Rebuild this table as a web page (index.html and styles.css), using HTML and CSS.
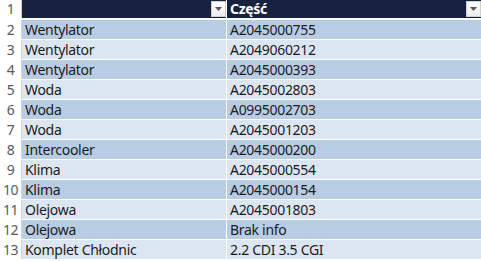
FILE: index.html
```html
<!DOCTYPE html>
<html lang="pl">
<head>
<meta charset="utf-8">
<link rel="stylesheet" href="styles.css">
</head>
<body>
<div class="sheet">
  <div class="row head">
    <div class="num">1</div>
    <div class="cell"><span class="txt"></span><span class="dd"><svg width="7" height="4" viewBox="0 0 7 4"><path d="M0 0h7L3.5 4z" fill="#555"/></svg></span></div>
    <div class="cell"><span class="txt">Część</span><span class="dd"><svg width="7" height="4" viewBox="0 0 7 4"><path d="M0 0h7L3.5 4z" fill="#555"/></svg></span></div>
  </div>
  <div class="row dark"><div class="num">2</div><div class="cell">Wentylator</div><div class="cell">A2045000755</div></div>
  <div class="row light"><div class="num">3</div><div class="cell">Wentylator</div><div class="cell">A2049060212</div></div>
  <div class="row dark"><div class="num">4</div><div class="cell">Wentylator</div><div class="cell">A2045000393</div></div>
  <div class="row light"><div class="num">5</div><div class="cell">Woda</div><div class="cell">A2045002803</div></div>
  <div class="row dark"><div class="num">6</div><div class="cell">Woda</div><div class="cell">A0995002703</div></div>
  <div class="row light"><div class="num">7</div><div class="cell">Woda</div><div class="cell">A2045001203</div></div>
  <div class="row dark"><div class="num">8</div><div class="cell">Intercooler</div><div class="cell">A2045000200</div></div>
  <div class="row light"><div class="num">9</div><div class="cell">Klima</div><div class="cell">A2045000554</div></div>
  <div class="row dark"><div class="num">10</div><div class="cell">Klima</div><div class="cell">A2045000154</div></div>
  <div class="row light"><div class="num">11</div><div class="cell">Olejowa</div><div class="cell">A2045001803</div></div>
  <div class="row dark"><div class="num">12</div><div class="cell">Olejowa</div><div class="cell">Brak info</div></div>
  <div class="row light"><div class="num">13</div><div class="cell">Komplet Chłodnic</div><div class="cell">2.2 CDI 3.5 CGI</div></div>
</div>
</body>
</html>
```

FILE: styles.css
```css
html, body {
  margin: 0;
  padding: 0;
  background: #ffffff;
}
body {
  width: 481px;
  height: 261px;
  overflow: hidden;
  font-family: "Noto Sans", "Open Sans", sans-serif;
  font-size: 14px;
  color: #1c1c1c;
}
.sheet {
  display: flex;
  flex-direction: column;
  gap: 1px;
}
.row {
  display: grid;
  grid-template-columns: 21px 204px 254px;
  column-gap: 1px;
  height: 19px;
  align-items: stretch;
}
.row.head {
  height: 18px;
  margin-bottom: 1px;
}
.num {
  background: #ffffff;
  color: #5a5a5a;
  font-size: 14px;
  letter-spacing: -0.5px;
  display: flex;
  align-items: center;
  justify-content: center;
  border-right: 1px solid #d4d4d4;
  margin-right: -1px;
  line-height: 1;
}
.row.head .cell {
  background: #17223f;
  color: #fff;
  font-weight: bold;
  justify-content: space-between;
  padding-right: 0;
}
.cell {
  display: flex;
  align-items: center;
  padding-left: 3px;
  line-height: 1;
  letter-spacing: -0.3px;
  white-space: nowrap;
}
.row.dark .cell { background: #b8cce4; }
.row.light .cell { background: #dce6f1; }
.dd {
  width: 15px;
  height: 16px;
  align-self: flex-end;
  margin-bottom: 1px;
  background: linear-gradient(#fdfdfd, #ececec);
  border: 1px solid #cfcfcf;
  box-sizing: border-box;
  display: flex;
  align-items: center;
  justify-content: center;
}
```
